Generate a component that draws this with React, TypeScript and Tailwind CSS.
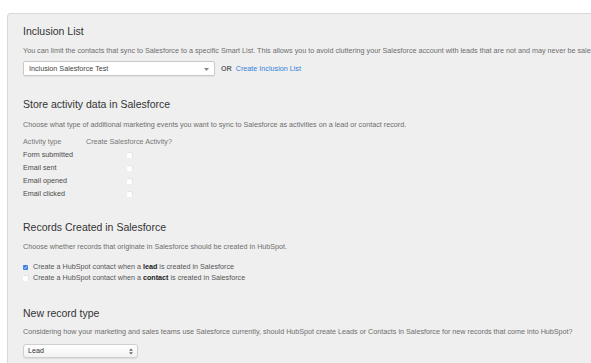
import React from "react";

const font = { fontFamily: '"Liberation Sans", Arial, Helvetica, sans-serif' };

function Heading({ children, className = "" }: { children: React.ReactNode; className?: string }) {
  return (
    <div className={"h-[14px] leading-[14px] text-[10.5px] text-[#333333] whitespace-nowrap " + className}>
      {children}
    </div>
  );
}

function Desc({ children, className = "" }: { children: React.ReactNode; className?: string }) {
  return (
    <div className={"h-[10px] leading-[10px] text-[7.2px] text-[#6e6e6e] whitespace-nowrap " + className}>
      {children}
    </div>
  );
}

function SmallBox({ checked = false }: { checked?: boolean }) {
  if (checked) {
    return (
      <span className="inline-flex w-[5px] h-[5px] bg-[#3b7ddd] rounded-[1px] items-center justify-center">
        <svg width="5" height="5" viewBox="0 0 5 5">
          <path d="M1 2.6 L2 3.6 L4 1.2" stroke="#ffffff" strokeWidth="0.8" fill="none" />
        </svg>
      </span>
    );
  }
  return <span className="inline-block w-[5px] h-[5px] bg-white rounded-[1px] shadow-[0.5px_-0.5px_0_#d8d8d8]" />;
}

export default function App() {
  const activities = ["Form submitted", "Email sent", "Email opened", "Email clicked"];
  return (
    <div className="w-[591px] h-[363px] bg-white overflow-hidden pt-[13px] pl-[7px]" style={font}>
      <div className="bg-[#efefef] border-l border-t border-[#d9d9d9] rounded-tl-[4px] pl-[15px] pt-[10px] h-[400px] w-[700px]">
        <Heading>Inclusion List</Heading>
        <Desc className="mt-[8px]">
          You can limit the contacts that sync to Salesforce to a specific Smart List. This allows you to avoid cluttering your Salesforce account with leads that are not and may never be sales ready.
        </Desc>
        <div className="mt-[5px] flex items-center h-[15px]">
          <div className="w-[192px] h-[15px] bg-white border border-[#c9c9c9] rounded-[2px] shadow-[0_1px_1px_rgba(0,0,0,0.06)] flex items-center justify-between pl-[5px] pr-[5px]">
            <span className="text-[7.2px] text-[#444] leading-none">Inclusion Salesforce Test</span>
            <svg width="5" height="4" viewBox="0 0 5 4" className="mt-[2px]">
              <path d="M0 0 H5 L2.5 3 Z" fill="#888" />
            </svg>
          </div>
          <span className="ml-[6px] text-[7.2px] font-bold text-[#666] leading-none">OR</span>
          <span className="ml-[4px] text-[7.2px] text-[#2f7fdc] leading-none">Create Inclusion List</span>
        </div>

        <Heading className="mt-[21px]">Store activity data in Salesforce</Heading>
        <Desc className="mt-[9px]">
          Choose what type of additional marketing events you want to sync to Salesforce as activities on a lead or contact record.
        </Desc>
        <div className="mt-[7px] grid grid-cols-[63px_84px] text-[7.2px] leading-[10px] whitespace-nowrap">
          <div className="h-[10px] text-[#777]">Activity type</div>
          <div className="h-[10px] text-[#777]">Create Salesforce Activity?</div>
        </div>
        <div className="mt-[3px] flex flex-col gap-[3px]">
          {activities.map((a) => (
            <div key={a} className="grid grid-cols-[63px_84px] text-[7.2px] leading-[10px] h-[10px] whitespace-nowrap">
              <div className="text-[#4a4a4a]">{a}</div>
              <div className="flex items-center justify-center pl-[3px]">
                <SmallBox />
              </div>
            </div>
          ))}
        </div>

        <Heading className="mt-[21px]">Records Created in Salesforce</Heading>
        <Desc className="mt-[8px]">
          Choose whether records that originate in Salesforce should be created in HubSpot.
        </Desc>
        <div className="mt-[10px] flex flex-col whitespace-nowrap">
          <div className="h-[11px] flex items-center text-[7.2px] text-[#555]">
            <SmallBox checked />
            <span className="ml-[5px]">
              Create a HubSpot contact when a <b className="text-[#222]">lead</b> is created in Salesforce
            </span>
          </div>
          <div className="h-[11px] flex items-center text-[7.2px] text-[#555]">
            <SmallBox />
            <span className="ml-[5px]">
              Create a HubSpot contact when a <b className="text-[#222]">contact</b> is created in Salesforce
            </span>
          </div>
        </div>

        <Heading className="mt-[22px]">New record type</Heading>
        <Desc className="mt-[7px]">
          Considering how your marketing and sales teams use Salesforce currently, should HubSpot create Leads or Contacts in Salesforce for new records that come into HubSpot?
        </Desc>
        <div className="mt-[7px] w-[115px] h-[14px] rounded-[3px] border border-[#cfcfcf] bg-gradient-to-b from-white to-[#f2f2f2] shadow-[0_1px_1px_rgba(0,0,0,0.08)] flex items-center justify-between pl-[4px] pr-[4px]">
          <span className="text-[7.2px] text-[#333] leading-none">Lead</span>
          <svg width="4" height="7" viewBox="0 0 4 7">
            <path d="M0 2.8 L2 0.5 L4 2.8 Z" fill="#666" />
            <path d="M0 4.2 L2 6.5 L4 4.2 Z" fill="#666" />
          </svg>
        </div>
      </div>
    </div>
  );
}
